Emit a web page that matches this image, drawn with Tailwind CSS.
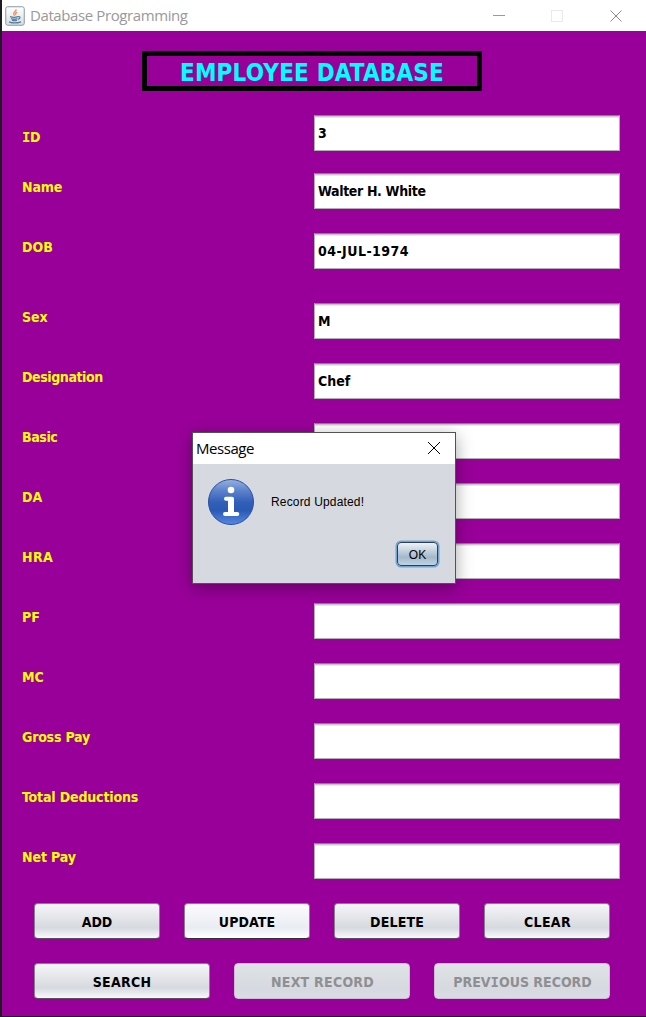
<!DOCTYPE html>
<html lang="en">
<head>
<meta charset="utf-8">
<title>Database Programming</title>
<script src="https://cdn.jsdelivr.net/npm/@tailwindcss/browser@4"></script>
</head>
<body class="w-[646px] h-[1017px] overflow-hidden bg-[#1c1c22]">
<div class="relative w-[646px] h-[1016px] pl-[2px]">
  <header class="flex h-[31px] items-center bg-white pl-[3px] text-[#999]">
    <svg class="h-5 w-5 shrink-0" viewBox="0 0 20 20" fill="none">
      <defs><linearGradient id="cup" x2="0" y2="1"><stop stop-color="#fff"/><stop offset="1" stop-color="#d8dde1"/></linearGradient></defs>
      <rect x=".75" y=".75" width="18.5" height="18.5" rx="2" fill="url(#cup)" stroke="#8998a4"/>
      <path d="M11 3.200c1 2-3.500 3-2.200 5 .3.700 1 1.100 1 1.600M12.300 6c-2 1-2 1.700-1.200 2.700" stroke="#e78b58" stroke-width="1.300"/>
      <path d="M5 10.700c2 .6 6 .6 8 0M6 12.700c2 .7 4.500 .7 6.500 0M7 14.300c1.500.4 3.500 .4 5 0M13 10.600c2.800-.5 2.500 2.200 0 2.700M4 15.800c3 1.300 8.500 1.200 12 0" stroke="#567f9e" stroke-width="1.300"/>
    </svg>
    <h1 class="mb-px ml-[5px] font-['Open_Sans',sans-serif] text-[15px] leading-5 tracking-[-0.4px]">Database Programming</h1>
    <svg class="ml-auto mr-[22px] h-3 w-[132px]" viewBox="0 0 132 12" fill="none" shape-rendering="crispEdges">
      <path d="M1 5.500h12" stroke="#999"/>
      <rect x="59.500" y=".5" width="11" height="11" stroke="#e9e9e9"/>
      <path d="M118.500.5l11 11M129.500.5l-11 11" stroke="#888" shape-rendering="auto"/>
    </svg>
  </header>
  <main class="h-[985px] bg-[#990099] pt-5 font-['DejaVu_Sans_Condensed','DejaVu_Sans',sans-serif] text-[14px] font-bold font-stretch-condensed">
    <h2 class="ml-[140px] flex h-10 w-[340px] items-center justify-center border-[5px] border-black pt-[3px] text-[24px] leading-none tracking-[0.18px] text-[#00ffff]">EMPLOYEE DATABASE</h2>
    <div class="mt-6 ml-5 w-[598px] text-black">
      <div class="mb-[22px] flex h-9"><label class="mt-[13px] w-[292px] leading-[18px] tracking-[-0.4px] text-[#ffff00]"><span class="font-['DejaVu_Sans_Mono',monospace]">I</span>D</label><div class="flex flex-1 items-center border border-[#b0b0b0] border-t-[#858585] bg-white pl-[3px] shadow-[inset_0_1px_0_#c9c9c9,inset_0_2px_0_#e8e8e8]">3</div></div>
      <div class="mb-6 flex h-9"><label class="mt-[5px] w-[292px] leading-[18px] tracking-[-0.1px] text-[#ffff00]">Name</label><div class="flex flex-1 items-center border border-[#b0b0b0] border-t-[#858585] bg-white pl-[3px] tracking-[-0.35px] shadow-[inset_0_1px_0_#c9c9c9,inset_0_2px_0_#e8e8e8]">Walter H. White</div></div>
      <div class="mb-[34px] flex h-9"><label class="mt-[5px] w-[292px] leading-[18px] text-[#ffff00]">DOB</label><div class="flex flex-1 items-center border border-[#b0b0b0] border-t-[#858585] bg-white pl-[3px] tracking-[0.45px] shadow-[inset_0_1px_0_#c9c9c9,inset_0_2px_0_#e8e8e8]">04-JUL-1974</div></div>
      <div class="mb-6 flex h-9"><label class="mt-[5px] w-[292px] leading-[18px] text-[#ffff00]">Sex</label><div class="flex flex-1 items-center border border-[#b0b0b0] border-t-[#858585] bg-white pl-[3px] shadow-[inset_0_1px_0_#c9c9c9,inset_0_2px_0_#e8e8e8]">M</div></div>
      <div class="mb-6 flex h-9"><label class="mt-[5px] w-[292px] leading-[18px] tracking-[-0.4px] text-[#ffff00]">Designation</label><div class="flex flex-1 items-center border border-[#b0b0b0] border-t-[#858585] bg-white pl-[3px] shadow-[inset_0_1px_0_#c9c9c9,inset_0_2px_0_#e8e8e8]">Chef</div></div>
      <div class="mb-6 flex h-9"><label class="mt-[5px] w-[292px] leading-[18px] tracking-[-0.4px] text-[#ffff00]">Basic</label><div class="flex-1 border border-[#b0b0b0] border-t-[#858585] bg-white shadow-[inset_0_1px_0_#c9c9c9,inset_0_2px_0_#e8e8e8]"></div></div>
      <div class="mb-6 flex h-9"><label class="mt-[5px] w-[292px] leading-[18px] text-[#ffff00]">DA</label><div class="flex-1 border border-[#b0b0b0] border-t-[#858585] bg-white shadow-[inset_0_1px_0_#c9c9c9,inset_0_2px_0_#e8e8e8]"></div></div>
      <div class="mb-6 flex h-9"><label class="mt-[5px] w-[292px] leading-[18px] tracking-[0.4px] text-[#ffff00]">HRA</label><div class="flex-1 border border-[#b0b0b0] border-t-[#858585] bg-white shadow-[inset_0_1px_0_#c9c9c9,inset_0_2px_0_#e8e8e8]"></div></div>
      <div class="mb-6 flex h-9"><label class="mt-[5px] w-[292px] leading-[18px] text-[#ffff00]">PF</label><div class="flex-1 border border-[#b0b0b0] border-t-[#858585] bg-white shadow-[inset_0_1px_0_#c9c9c9,inset_0_2px_0_#e8e8e8]"></div></div>
      <div class="mb-6 flex h-9"><label class="mt-[5px] w-[292px] leading-[18px] text-[#ffff00]">MC</label><div class="flex-1 border border-[#b0b0b0] border-t-[#858585] bg-white shadow-[inset_0_1px_0_#c9c9c9,inset_0_2px_0_#e8e8e8]"></div></div>
      <div class="mb-6 flex h-9"><label class="mt-[5px] w-[292px] leading-[18px] tracking-[-0.2px] text-[#ffff00]">Gross Pay</label><div class="flex-1 border border-[#b0b0b0] border-t-[#858585] bg-white shadow-[inset_0_1px_0_#c9c9c9,inset_0_2px_0_#e8e8e8]"></div></div>
      <div class="mb-6 flex h-9"><label class="mt-[5px] w-[292px] leading-[18px] tracking-[-0.15px] text-[#ffff00]">Total Deductions</label><div class="flex-1 border border-[#b0b0b0] border-t-[#858585] bg-white shadow-[inset_0_1px_0_#c9c9c9,inset_0_2px_0_#e8e8e8]"></div></div>
      <div class="mb-6 flex h-9"><label class="mt-[5px] w-[292px] leading-[18px] tracking-[-0.1px] text-[#ffff00]">Net Pay</label><div class="flex-1 border border-[#b0b0b0] border-t-[#858585] bg-white shadow-[inset_0_1px_0_#c9c9c9,inset_0_2px_0_#e8e8e8]"></div></div>
    </div>
    <div class="ml-8 grid w-[576px] grid-cols-4 gap-6 text-black">
      <button class="h-9 rounded border border-[#85808c] border-b-[#555059] bg-linear-to-b from-[#f5f6f8] via-[#d6d9df] via-70% to-[#f8f9fd] pt-[2px]">ADD</button>
      <button class="h-9 rounded border border-[#85808c] border-b-[#333] bg-linear-to-b from-[#fbfcfd] via-[#e9ecf2] via-70% to-white pt-[2px] tracking-[0.1px]">UPDATE</button>
      <button class="h-9 rounded border border-[#85808c] border-b-[#555059] bg-linear-to-b from-[#f5f6f8] via-[#d6d9df] via-70% to-[#f8f9fd] pt-[2px] tracking-[0.15px]">DELETE</button>
      <button class="h-9 rounded border border-[#85808c] border-b-[#555059] bg-linear-to-b from-[#f5f6f8] via-[#d6d9df] via-70% to-[#f8f9fd] pt-[2px] pl-px tracking-[0.3px]">CLEAR</button>
    </div>
    <div class="mt-6 ml-8 grid w-[576px] grid-cols-3 gap-6 text-black">
      <button class="h-9 rounded border border-[#85808c] border-b-[#555059] bg-linear-to-b from-[#f5f6f8] via-[#d6d9df] via-70% to-[#f8f9fd] pt-[2px] tracking-[0.3px]">SEARCH</button>
      <button class="h-9 rounded border border-[#c9bdcf] bg-linear-to-b from-[#dfe2e6] via-[#d6d9df] via-70% to-[#d9dce4] pt-[2px] pl-px tracking-[0.25px] text-[#8e8f91]" disabled>NEXT RECORD</button>
      <button class="h-9 rounded border border-[#c9bdcf] bg-linear-to-b from-[#dfe2e6] via-[#d6d9df] via-70% to-[#d9dce4] pt-[2px] pl-px whitespace-nowrap text-[#8e8f91]" disabled>PREV<span class="font-['DejaVu_Sans_Mono',monospace]">I</span>OUS RECORD</button>
    </div>
  </main>
  <section class="absolute top-[432px] left-[192px] h-[152px] w-[264px] border border-[#554f58] bg-[#d6d9df] text-black shadow-[0_4px_16px_rgba(0,0,0,0.35)]">
    <div class="flex h-[31px] items-center justify-between bg-white pr-[15px] pl-[3px]">
      <h3 class="mb-px font-['Open_Sans',sans-serif] text-[15px] leading-5 tracking-[-0.45px]">Message</h3>
      <svg class="mb-px h-3 w-3" viewBox="0 0 12 12" stroke="#000"><path d="M0 0l12 12M12 0L0 12"/></svg>
    </div>
    <div class="mt-[14px] ml-[14px] flex items-center">
      <svg class="h-12 w-12" viewBox="0 0 48 48">
        <defs><linearGradient id="info" x2="0" y2="1"><stop stop-color="#96b1e2"/><stop offset=".25" stop-color="#5c82cc"/><stop offset=".5" stop-color="#3260b8"/><stop offset=".68" stop-color="#2a59b4"/><stop offset="1" stop-color="#5689e4"/></linearGradient></defs>
        <circle cx="24" cy="24" r="22.500" fill="url(#info)" stroke="#2c509d"/>
        <circle cx="24" cy="12" r="3.300" fill="#fff"/>
        <path d="M19 18.700h6q2 0 2 2v13.300h3.300q2 0 2 2t-2 2H18q-2 0-2-2t2-2H21V22.700h-2q-2 0-2-2t2-2z" fill="#fff"/>
      </svg>
      <p class="ml-4 font-['Liberation_Sans',sans-serif] text-[12px] leading-4 tracking-[0.16px]">Record Updated!</p>
    </div>
    <button class="mt-4 ml-[204px] flex h-[24px] w-[41px] items-center justify-center rounded border border-[#2a4058] bg-linear-to-b from-[#eef2f5] via-[#a3b8ca] via-65% to-[#bfd4e6] pt-px font-['Liberation_Sans',sans-serif] text-[12px] shadow-[0_0_0_1.5px_#73a4d1]">OK</button>
  </section>
</div>
</body>
</html>
